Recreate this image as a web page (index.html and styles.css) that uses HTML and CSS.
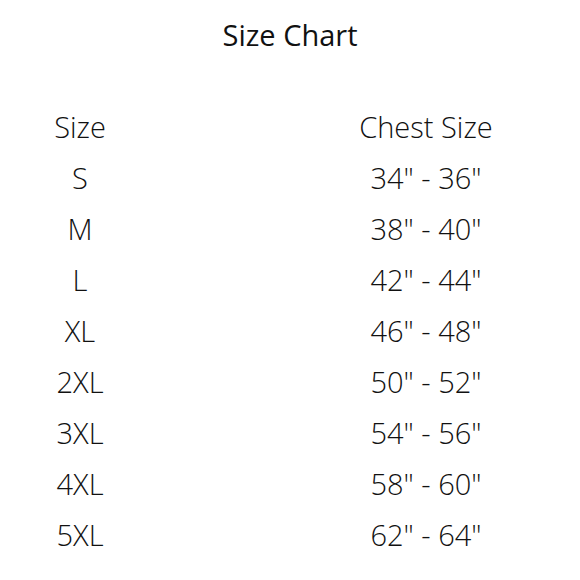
FILE: index.html
```html
<!DOCTYPE html>
<html>
<head>
<meta charset="utf-8">
<link rel="stylesheet" href="styles.css">
</head>
<body>
<div class="page">
  <h1 class="title">Size Chart</h1>
  <div class="table">
    <div class="cell c1">Size</div><div class="cell c2">Chest Size</div>
    <div class="cell c1">S</div><div class="cell c2">34" - 36"</div>
    <div class="cell c1">M</div><div class="cell c2">38" - 40"</div>
    <div class="cell c1">L</div><div class="cell c2">42" - 44"</div>
    <div class="cell c1">XL</div><div class="cell c2">46" - 48"</div>
    <div class="cell c1">2XL</div><div class="cell c2">50" - 52"</div>
    <div class="cell c1">3XL</div><div class="cell c2">54" - 56"</div>
    <div class="cell c1">4XL</div><div class="cell c2">58" - 60"</div>
    <div class="cell c1">5XL</div><div class="cell c2">62" - 64"</div>
  </div>
</div>
</body>
</html>
```

FILE: styles.css
```css
html, body {
  margin: 0;
  padding: 0;
  background: #fff;
}
.page {
  width: 580px;
  height: 580px;
  font-family: "Open Sans", "Liberation Sans", sans-serif;
  color: #111;
}
.title {
  margin: 0;
  padding-top: 15px;
  text-align: center;
  font-size: 29px;
  font-weight: 400;
  line-height: 40px;
}
.table {
  display: grid;
  grid-template-columns: 100px 200px;
  column-gap: 196px;
  padding-left: 30px;
  margin-top: 46px;
}
.cell {
  font-size: 29px;
  font-weight: 300;
  line-height: 51px;
  height: 51px;
  text-align: center;
}
```
